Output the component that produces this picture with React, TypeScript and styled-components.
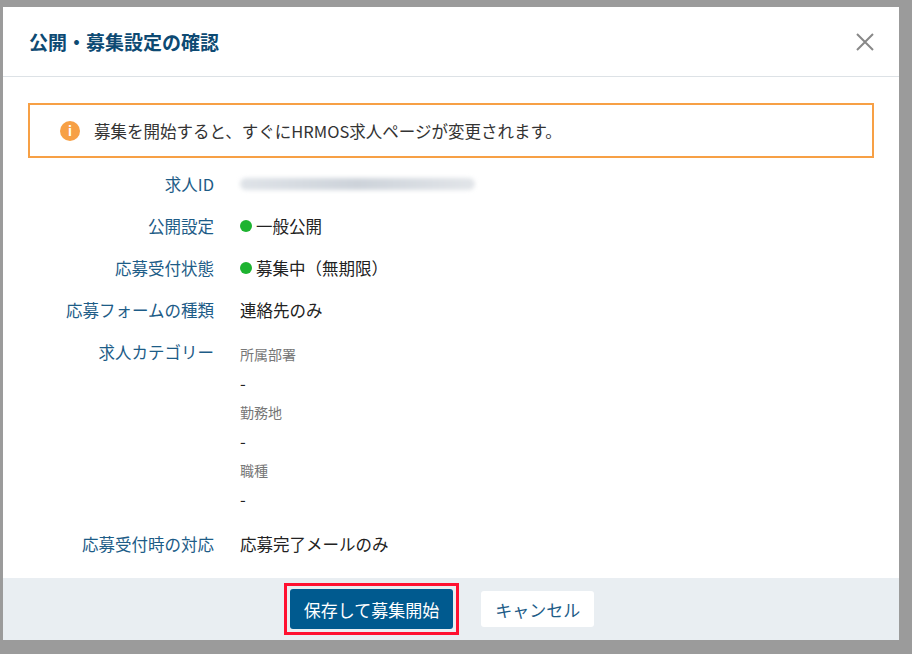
import styled, { createGlobalStyle } from "styled-components";

const Global = createGlobalStyle`
  body {
    margin: 0;
    background: #9b9b9b;
    font-family: "Noto Sans CJK JP", "Noto Sans", sans-serif;
  }
`;

const Page = styled.div`
  width: 912px;
  height: 654px;
  padding: 7px 13px 14px 3px;
  box-sizing: border-box;
`;

const Modal = styled.div`
  background: #fff;
  height: 633px;
  display: flex;
  flex-direction: column;
`;

const Header = styled.div`
  height: 69px;
  border-bottom: 1px solid #dde2e6;
  display: flex;
  align-items: center;
  justify-content: space-between;
  padding: 0 24px 0 26px;
`;

const Title = styled.h1`
  margin: 0;
  font-size: 19px;
  font-weight: 700;
  color: #0d4a73;
`;

const Close = styled.button`
  border: 0;
  background: none;
  padding: 0;
  display: flex;
`;

const Body = styled.div`
  flex: 1;
  padding: 26px 25px 0 25px;
`;

const Alert = styled.div`
  border: 2px solid #f7a045;
  height: 55px;
  box-sizing: border-box;
  display: flex;
  align-items: center;
  gap: 14px;
  padding-left: 30px;
  font-size: 16.5px;
  color: #333;
  margin-bottom: 14px;
`;

const InfoIcon = styled.span`
  width: 20px;
  height: 20px;
  border-radius: 50%;
  background: #f7a045;
  color: #fff;
  font-size: 13px;
  font-weight: 700;
  display: flex;
  align-items: center;
  justify-content: center;
`;

const Rows = styled.div`
  display: grid;
  grid-template-columns: 186px 1fr;
  column-gap: 26px;
  row-gap: 18px;
  font-size: 16.5px;
  line-height: 24px;
`;

const Label = styled.div`
  text-align: right;
  color: #1d5c87;
`;

const Value = styled.div`
  color: #222;
  display: flex;
  align-items: center;
  gap: 4px;
`;

const Dot = styled.span`
  width: 12px;
  height: 12px;
  border-radius: 50%;
  background: #1db330;
`;

const Blur = styled.span`
  width: 235px;
  height: 12px;
  border-radius: 6px;
  background: linear-gradient(90deg, #dfe3e8, #cdd3da 50%, #e2e5e9);
  filter: blur(2px);
`;

const Sub = styled.div`
  display: flex;
  flex-direction: column;
`;

const SubLabel = styled.div`
  font-size: 14px;
  color: #777;
  line-height: 28px;
`;

const SubValue = styled.div`
  color: #222;
  line-height: 30px;
`;

const Footer = styled.div`
  height: 62px;
  background: #e9eef2;
  display: flex;
  align-items: center;
  justify-content: center;
  gap: 22px;
  padding-right: 24px;
`;

const Highlight = styled.div`
  border: 3px solid #ff1030;
  padding: 3px;
`;

const Button = styled.button<{ $primary?: boolean }>`
  height: ${(p) => (p.$primary ? "40px" : "36px")};
  padding: 0 14px;
  border: 0;
  border-radius: 3px;
  font-family: inherit;
  font-size: 17px;
  background: ${(p) => (p.$primary ? "#005a8f" : "#fff")};
  color: ${(p) => (p.$primary ? "#fff" : "#1d5c87")};
`;

export default function App() {
  return (
    <Page>
      <Global />
      <Modal>
        <Header>
          <Title>公開・募集設定の確認</Title>
          <Close>
            <svg width="20" height="20" viewBox="0 0 20 20">
              <path d="M2 2L18 18M18 2L2 18" stroke="#888" strokeWidth="2" />
            </svg>
          </Close>
        </Header>
        <Body>
          <Alert>
            <InfoIcon>i</InfoIcon>
            募集を開始すると、すぐにHRMOS求人ページが変更されます。
          </Alert>
          <Rows>
            <Label>求人ID</Label>
            <Value>
              <Blur />
            </Value>
            <Label>公開設定</Label>
            <Value>
              <Dot />
              一般公開
            </Value>
            <Label>応募受付状態</Label>
            <Value>
              <Dot />
              募集中（無期限）
            </Value>
            <Label>応募フォームの種類</Label>
            <Value>連絡先のみ</Value>
            <Label>求人カテゴリー</Label>
            <Sub>
              <SubLabel>所属部署</SubLabel>
              <SubValue>-</SubValue>
              <SubLabel>勤務地</SubLabel>
              <SubValue>-</SubValue>
              <SubLabel>職種</SubLabel>
              <SubValue>-</SubValue>
            </Sub>
            <Label>応募受付時の対応</Label>
            <Value>応募完了メールのみ</Value>
          </Rows>
        </Body>
        <Footer>
          <Highlight>
            <Button $primary>保存して募集開始</Button>
          </Highlight>
          <Button>キャンセル</Button>
        </Footer>
      </Modal>
    </Page>
  );
}
